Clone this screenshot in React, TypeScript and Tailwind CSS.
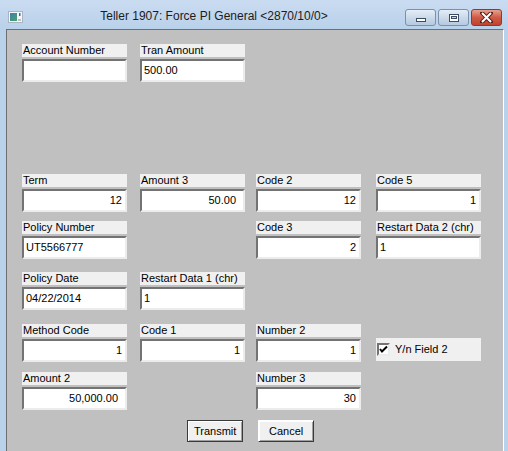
import React from "react";

type FieldProps = {
  label: string;
  value?: string;
  right?: boolean;
  money?: boolean;
};

function Field({ label, value = "", right, money }: FieldProps) {
  return (
    <div className="w-[105px] flex flex-col">
      <div className="h-[13px] bg-[#f0f0f0] text-[11px] leading-[13px] pl-px text-black whitespace-nowrap">
        {label}
      </div>
      <div
        className={`mt-[2px] h-[23px] bg-white border-2 border-t-[#737373] border-l-[#737373] border-b-[#ececec] border-r-[#ececec] flex items-center text-[11px] text-black ${
          right ? "justify-end" : "justify-start"
        } ${money ? "pr-[7px]" : "pr-[3px]"} pl-[2px]`}
      >
        {value}
      </div>
    </div>
  );
}

function Check() {
  return (
    <div className="mt-[14px] w-[105px] h-[23px] bg-[#f0f0f0] flex items-center pl-px">
      <div className="w-[13px] h-[13px] bg-white border-2 border-t-[#737373] border-l-[#737373] border-b-[#ececec] border-r-[#ececec] flex items-center justify-center">
        <svg width="9" height="9" viewBox="0 0 9 9">
          <polyline points="1,4 3,6.5 8,1.5" fill="none" stroke="#000" strokeWidth="2" />
        </svg>
      </div>
      <span className="ml-[5px] text-[11px] text-black">Y/n Field 2</span>
    </div>
  );
}

function Btn({ children, def }: { children: React.ReactNode; def?: boolean }) {
  return (
    <button
      className={`h-[22px] bg-[#f0f0f0] text-[11px] text-black border ${
        def ? "border-[#3a3a3a]" : "border-t-white border-l-white border-b-[#3a3a3a] border-r-[#3a3a3a]"
      } shadow-[inset_1px_1px_0_#ffffff,inset_-1px_-1px_0_#a0a0a0]`}
    >
      {children}
    </button>
  );
}

function CaptionBtn({ kind }: { kind: "min" | "max" | "close" }) {
  if (kind === "close") {
    return (
      <div className="w-[31px] h-[17px] rounded-[3px] border border-[#8a3b30] bg-gradient-to-b from-[#e8a08f] via-[#cf5a45] to-[#c2412c] flex items-center justify-center">
        <svg width="13" height="11" viewBox="0 0 13 11">
          <path d="M2 1 L11 10 M11 1 L2 10" stroke="#5a2018" strokeWidth="4" strokeLinecap="square" />
          <path d="M2 1 L11 10 M11 1 L2 10" stroke="#ffffff" strokeWidth="2" />
        </svg>
      </div>
    );
  }
  return (
    <div className="w-[31px] h-[17px] rounded-[3px] border border-[#7b90ab] bg-gradient-to-b from-[#e4edf7] via-[#cbdaeb] to-[#b5c9e0] flex items-center justify-center">
      {kind === "min" ? (
        <div className="mt-[5px] w-[10px] h-[4px] bg-white border border-[#3c4d63]" />
      ) : (
        <div className="w-[10px] h-[8px] bg-white border border-[#3c4d63] flex items-center justify-center">
          <div className="w-[6px] h-[3px] bg-[#c5d3e3] border border-[#3c4d63]" />
        </div>
      )}
    </div>
  );
}

export default function App() {
  return (
    <div className="w-[508px] h-[451px] overflow-hidden flex flex-col bg-[#b9d1ea] font-['Liberation_Sans',Arial,sans-serif]">
      {/* Title bar */}
      <div className="h-[29px] shrink-0 flex items-start bg-gradient-to-b from-[#cadcf1] to-[#b9d1ea]">
        <div className="ml-[8px] mt-[11px] w-[15px] h-[12px]">
          <svg width="15" height="12" viewBox="0 0 15 12">
            <defs>
              <linearGradient id="ic" x1="0" y1="0" x2="1" y2="1">
                <stop offset="0" stopColor="#3f7fb0" />
                <stop offset="1" stopColor="#4aa36a" />
              </linearGradient>
            </defs>
            <rect x="0.5" y="0.5" width="14" height="11" fill="#f4f6f8" stroke="#a9b4bf" />
            <rect x="2" y="2" width="7" height="8" fill="url(#ic)" />
            <rect x="11" y="2" width="1.5" height="3" fill="#2d6bd0" />
            <rect x="10" y="8" width="3" height="2" fill="#b8c0c8" />
          </svg>
        </div>
        <div className="flex-1 text-center mt-[9px] text-[12px] text-[#1c1c1c] leading-[15px] whitespace-nowrap">
          Teller 1907: Force PI General &lt;2870/10/0&gt;
        </div>
        <div className="mt-[9px] mr-[6px] flex gap-[2px]">
          <CaptionBtn kind="min" />
          <CaptionBtn kind="max" />
          <CaptionBtn kind="close" />
        </div>
      </div>

      {/* Client area */}
      <div className="ml-[6px] w-[498px] flex-1 bg-[#c0c0c0] border-l border-t border-l-[#6e6e6e] border-t-[#6e6e6e] border-r border-r-white pl-[15px] pt-[14px]">
        <div className="grid grid-cols-[118px_116px_120px_105px] grid-rows-[130px_47px_51px_52px_48px_48px]">
          <Field label="Account Number" />
          <Field label="Tran Amount" value="500.00" />
          <div />
          <div />

          <Field label="Term" value="12" right />
          <Field label="Amount 3" value="50.00" right money />
          <Field label="Code 2" value="12" right />
          <Field label="Code 5" value="1" right />

          <Field label="Policy Number" value="UT5566777" />
          <div />
          <Field label="Code 3" value="2" right />
          <Field label="Restart Data 2 (chr)" value="1" />

          <Field label="Policy Date" value="04/22/2014" />
          <Field label="Restart Data 1 (chr)" value="1" />
          <div />
          <div />

          <Field label="Method Code" value="1" right />
          <Field label="Code 1" value="1" right />
          <Field label="Number 2" value="1" right />
          <Check />

          <Field label="Amount 2" value="50,000.00" right money />
          <div />
          <Field label="Number 3" value="30" right />
          <div />
        </div>
        <div className="flex pl-[165px] gap-[19px]">
          <div className="w-[52px] flex">
            <Btn def>
              <span className="px-[6px]">Transmit</span>
            </Btn>
          </div>
          <div className="w-[54px] flex">
            <Btn>
              <span className="px-[10px]">Cancel</span>
            </Btn>
          </div>
        </div>
      </div>
    </div>
  );
}
